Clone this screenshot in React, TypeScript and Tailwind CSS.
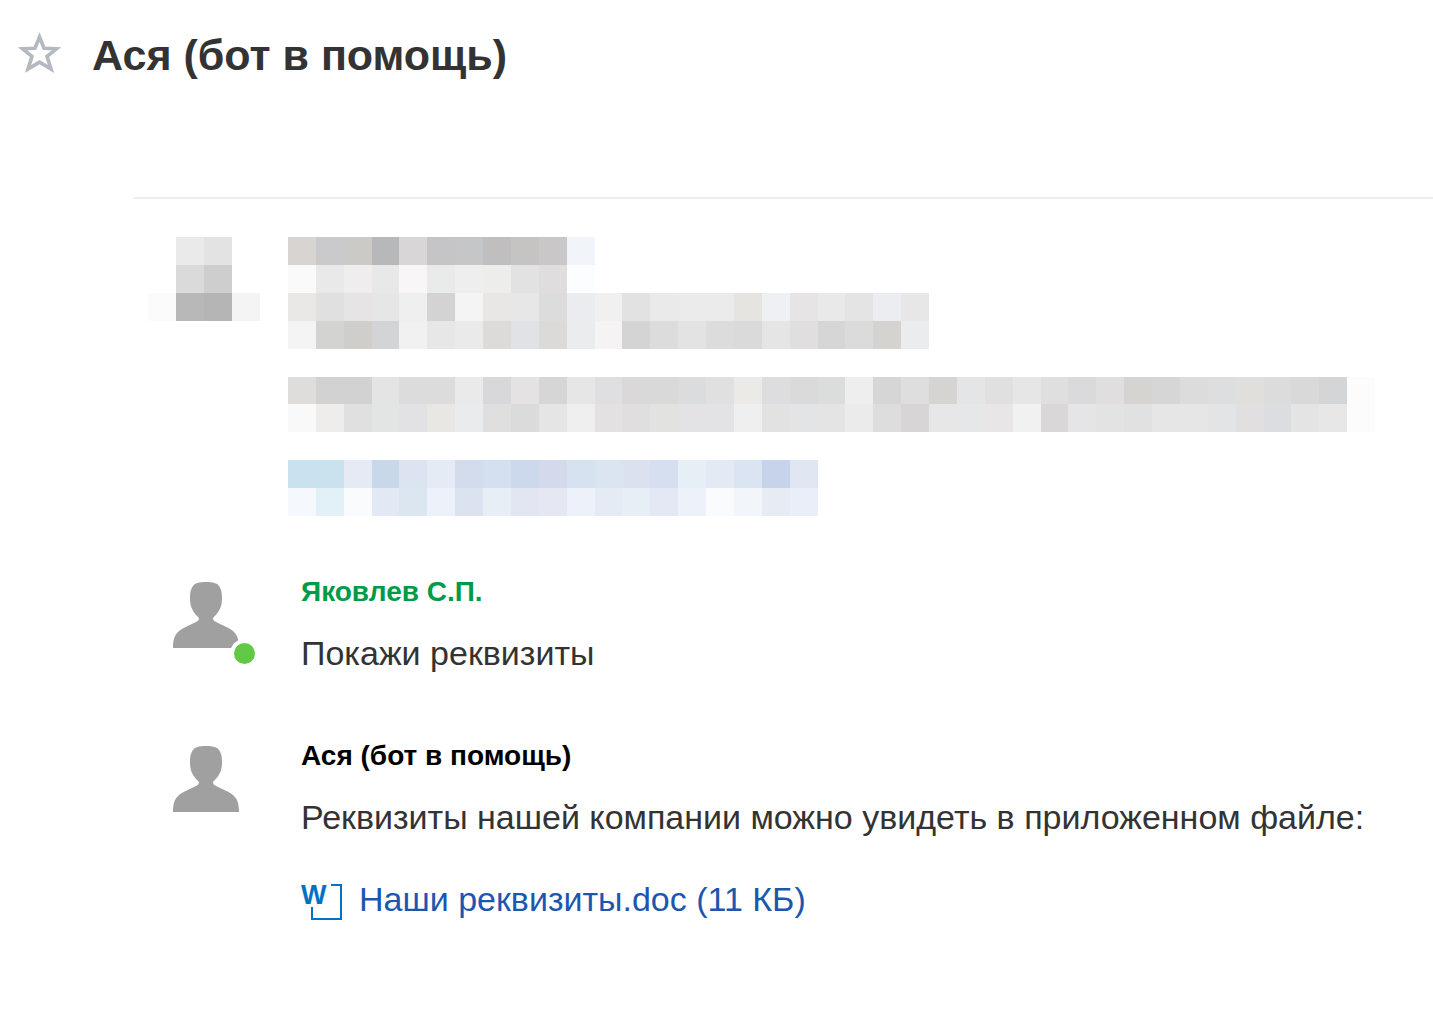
import React from "react";

// Colours of the hidden message, one array per row of tiles
const messageTiles = [
  "d8d4d2 cacacc cccac7 b6b8b9 d8d6d7 c5c5c8 c4c6c8 c1bebf c6c4c2 cac7c8 f1f5f9",
  "fafafa e9e9e9 efedee e8e8e8 f8f6f7 e9ebea eeeeee ededec e2e2e2 dfddde fbfdff",
  "eae8e6 e0e0e0 e7e4e6 e6e6e6 efefef d3d3d3 f4f4f4 e9e7e4 e7e7e7 dcdcdc eaecef f0f0f0 e2e2e2 eaeaea ecebec ebebeb e6e4e1 eef0f3 e6e4e5 e9e9e9 e4e4e4 ecedf0 e7e7e7",
  "f4f4f4 d3d4d1 cfcecb d3d4d6 f1f1f1 e7e7e7 eaeaea dddbd9 e0e2e5 dcdad8 ebecee f5f3f4 d4d4d4 dcdcdc e3e3e3 dcdcdc dadada e5e5e5 e0dedf d6d6d6 dbdbdb d5d3d0 ebecee",
  "",
  "dedddb d2d2d2 d2d2d2 e4e4e4 dcdcdc dcdcdc eaeaea d8d8da e5e2e3 d6d6d6 e6e6e6 dfdfe1 dbd8d9 d9d9d9 dadcde e0e0e0 ebeae7 dddde0 dadada dbdddc eeeeee d6d6d6 dedede d6d4d1 e3e5e7 e0e0e0 e6e6e6 dfdfdf dadadd e1dedf d5d4d0 d6d6d6 dcdcdc dcdee0 e1dfdc dcdcdc d9d9d9 d4d5d7 fcfcfc",
  "f9f9f9 eeedeb e0e0e0 e3e4e4 e2e2e4 e9e7e4 eaebed dfdfdf dbdbdb e5e5e5 efefef e3e1e2 e1dedf e2e2e1 e3e3e5 e3e3e5 efefef e2e2e2 e3e4e6 e4e4e4 ebebeb dddddd d8d5d6 e7e7e7 e5e7e9 e8e6e7 f1f1f1 dad7d8 e5e5e8 e3e3e3 e1e1e1 e6e6e6 e6e6e6 e2e4e6 e2dfe0 dcdde0 e4e4e4 e7e7e7 fcfcfc",
  "",
  "cae2ef cae2ee e5eaf4 c8d7ea dde4f1 e4ebf5 d3dcec d4e0ef ccd9ec d3daeb d7e2f0 dbe5f2 dce1ef d6dff0 e6eef6 e3eaf4 dae4f2 c7d3ea e0e6f2",
  "f5f9fd e2f1f8 fafbfd e2e8f4 dce6f1 edf1f9 dce3f0 e7eef6 e1e6f2 e5e8f3 edf2fa e4ebf5 e6eef6 e3e8f4 edf2fa fafbfd f2f6fa e7ebf4 eaeef8",
];

const avatarTiles = [
  "ffffff eaeaea e3e3e3 ffffff",
  "ffffff dadada cecece ffffff",
  "fbfbfb b8b8b8 b5b5b5 f4f4f4",
];

const Mosaic = ({
  rows,
  columns,
  className,
}: {
  rows: string[];
  columns: number;
  className: string;
}) => (
  <svg
    viewBox={`0 0 ${columns} ${rows.length}`}
    preserveAspectRatio="none"
    shapeRendering="crispEdges"
    aria-hidden="true"
    className={className}
  >
    {rows.map((row, y) =>
      row
        .split(" ")
        .filter(Boolean)
        .map((color, x) => (
          <rect key={`${x}-${y}`} x={x} y={y} width="1" height="1" fill={`#${color}`} />
        ))
    )}
  </svg>
);

const StarIcon = () => (
  <svg viewBox="0 0 44 42" fill="none" className="h-[42px] w-[44px]" aria-hidden="true">
    <path
      d="M21.5 5 L26 16.2 L38.5 16.8 L29 24.4 L33 37 L21.5 30.2 L10 37 L14 24.4 L4.5 16.8 L17 16.2 Z"
      stroke="#b3b9be"
      strokeWidth="3.6"
    />
  </svg>
);

const PersonIcon = () => (
  <svg viewBox="0 0 66 66" fill="#a0a0a0" className="h-[66px] w-[66px]" aria-hidden="true">
    <path d="M33 0 C40 0 44 1 46 4 C49 8 49 13 49 17 C49 26 45 31 40 36 C40 38 41 39 43 40 C50 44 56 45 61 50 C64 53 66 57 66 66 L0 66 C0 57 2 53 5 50 C10 45 16 44 23 40 C25 39 26 38 26 36 C21 31 17 26 17 17 C17 13 17 8 20 4 C22 1 26 0 33 0 Z" />
  </svg>
);

const WordIcon = () => (
  <svg
    viewBox="0 0 42 37"
    className="mt-[3px] h-[37px] w-[42px] shrink-0 overflow-visible"
    aria-hidden="true"
  >
    <path d="M30 1 H40 V35 H11 V23" fill="none" stroke="#0072c6" strokeWidth="2" />
    <text
      x="0"
      y="20"
      fill="#0072c6"
      fontSize="27"
      fontWeight="700"
      fontFamily="Liberation Sans, Arial, sans-serif"
    >
      W
    </text>
  </svg>
);

const Message = ({
  author,
  authorClass,
  online,
  children,
}: {
  author: string;
  authorClass: string;
  online?: boolean;
  children: React.ReactNode;
}) => (
  <article className="flex">
    <div className="w-[128px] shrink-0 pt-2">
      <div className="relative w-[66px]">
        <PersonIcon />
        {online && (
          <span className="absolute -right-5 -bottom-5 size-[29px] rounded-full border-4 border-white bg-[#62c946]" />
        )}
      </div>
    </div>
    <div className="min-w-0 flex-1">
      <h2 className={`text-[28px] leading-9 font-bold ${authorClass}`}>{author}</h2>
      {children}
    </div>
  </article>
);

export default function App() {
  return (
    <main className="min-h-screen bg-white pb-8 font-['Liberation_Sans',Arial,sans-serif] text-[#333333]">
      <header className="flex items-start gap-[30px] px-[18px] pt-8">
        <button type="button" aria-label="В избранное" className="shrink-0">
          <StarIcon />
        </button>
        <h1 className="text-[43px] leading-[46px] font-bold">Ася (бот в помощь)</h1>
      </header>

      <hr className="mt-[119px] ml-[133px] border-t-2 border-[#eeeeee]" />

      <div className="flex gap-7 pt-[38px] pr-14 pl-[148px]">
        <Mosaic rows={avatarTiles} columns={4} className="h-[84px] w-[112px] shrink-0" />
        <div className="min-w-0 flex-1">
          <Mosaic rows={messageTiles} columns={39} className="h-[279px] w-full max-w-[1087px]" />
        </div>
      </div>

      <section className="flex flex-col gap-[63px] pt-[58px] pr-8 pl-[173px]">
        <Message author="Яковлев С.П." authorClass="text-[#009b48]" online>
          <p className="mt-[21px] text-[34px] leading-11">Покажи реквизиты</p>
        </Message>

        <Message author="Ася (бот в помощь)" authorClass="text-black">
          <p className="mt-[21px] text-[34px] leading-11">
            Реквизиты нашей компании можно увидеть в приложенном файле:
          </p>
          <a
            href="#requisites"
            className="mt-[42px] flex items-start gap-4 text-[34px] leading-9 text-[#1b57b0]"
          >
            <WordIcon />
            <span>Наши реквизиты.doc (11 КБ)</span>
          </a>
        </Message>
      </section>
    </main>
  );
}
